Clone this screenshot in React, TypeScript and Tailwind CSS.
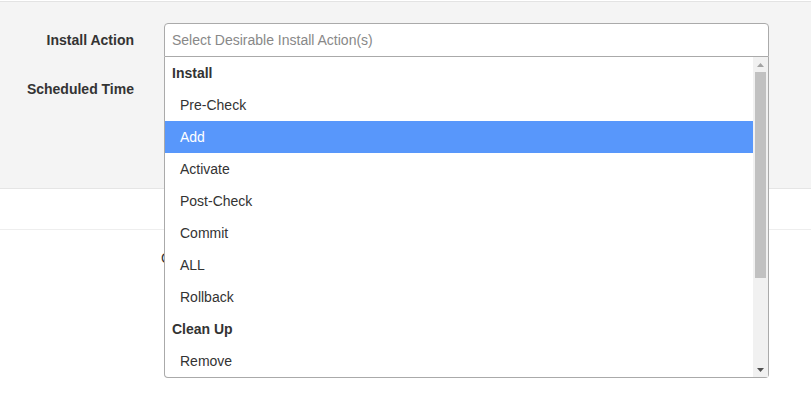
import { useState } from "react";

interface ActionGroup {
  label: string;
  options: string[];
}

const actionGroups: ActionGroup[] = [
  {
    label: "Install",
    options: ["Pre-Check", "Add", "Activate", "Post-Check", "Commit", "ALL", "Rollback"],
  },
  {
    label: "Clean Up",
    options: ["Remove"],
  },
];

// classic scrollbar drawn next to the option list
const ScrollRail = () => (
  <div className="flex w-[15px] shrink-0 flex-col bg-[#f1f1f1]">
    <div className="flex h-[15px] items-center justify-center">
      <svg width="7" height="4" viewBox="0 0 7 4">
        <polygon points="3.5,0 7,4 0,4" fill="#a3a3a3" />
      </svg>
    </div>
    <div className="mx-[2px] h-[206px] bg-[#c1c1c1]" />
    <div className="flex-1" />
    <div className="flex h-[15px] items-center justify-center">
      <svg width="7" height="4" viewBox="0 0 7 4">
        <polygon points="0,0 7,0 3.5,4" fill="#505050" />
      </svg>
    </div>
  </div>
);

const ActionSelect = () => {
  const [active, setActive] = useState("Add");

  return (
    <div className="relative ml-[30px] w-[605px]">
      <div className="flex h-[34px] items-center rounded-t-[4px] border border-[#aaa] bg-white px-[7px] text-[#888]">
        Select Desirable Install Action(s)
      </div>
      <div className="absolute left-0 top-full z-10 flex h-[321px] w-full rounded-b-[4px] border-x border-b border-[#aaa] bg-white">
        <ul className="min-w-0 flex-1 overflow-hidden">
          {actionGroups.map((group) => (
            <li key={group.label}>
              <div className="flex h-8 items-center pl-[7px] font-bold text-[#333]">
                {group.label}
              </div>
              <ul>
                {group.options.map((option) => (
                  <li
                    key={option}
                    onMouseEnter={() => setActive(option)}
                    className={
                      active === option
                        ? "flex h-8 items-center bg-[#5897fb] pl-[15px] text-white"
                        : "flex h-8 items-center pl-[15px] text-[#333]"
                    }
                  >
                    {option}
                  </li>
                ))}
              </ul>
            </li>
          ))}
        </ul>
        <ScrollRail />
      </div>
    </div>
  );
};

export default function App() {
  return (
    <div className="min-h-screen bg-white font-['Liberation_Sans',Arial,sans-serif] text-[14px] text-[#333]">
      <div className="mt-px box-border h-[188px] border-y border-t-[#e3e3e3] border-b-[#e5e5e5] bg-[#f4f4f4] pt-[21px]">
        <div className="flex items-center">
          <label className="w-[134px] text-right font-bold leading-5">Install Action</label>
          <ActionSelect />
        </div>
        <div className="mt-[22px] flex items-center">
          <label className="w-[134px] text-right font-bold leading-5">Scheduled Time</label>
        </div>
      </div>
      <div className="h-[41px] border-b border-[#eee]" />
      <div className="mt-[18px] pl-[161px] leading-5">
        <button className="text-[#333]">Cancel</button>
      </div>
    </div>
  );
}
